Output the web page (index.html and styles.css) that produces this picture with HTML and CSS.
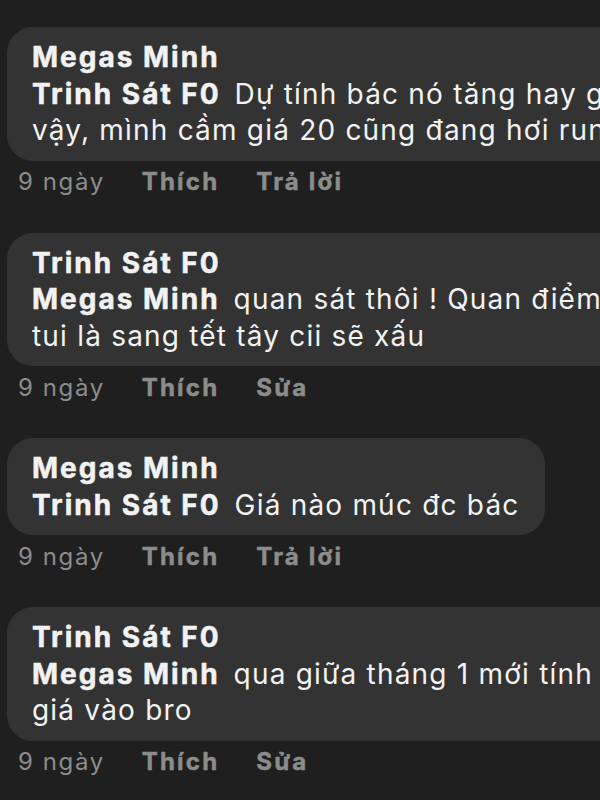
FILE: index.html
```html
<!DOCTYPE html>
<html lang="vi">
<head>
<meta charset="utf-8">
<link rel="stylesheet" href="styles.css">
</head>
<body>
<div class="thread">
  <div class="comment">
    <div class="bubble">
      <div class="line name">Megas Minh</div>
      <div class="line"><span class="tag">Trinh Sát F0</span>Dự tính bác nó tăng hay giảm</div>
      <div class="line">vậy, mình cầm giá 20 cũng đang hơi run</div>
    </div>
    <div class="meta"><span class="time">9 ngày</span><span class="act">Thích</span><span class="act">Trả lời</span></div>
  </div>
  <div class="comment">
    <div class="bubble">
      <div class="line name">Trinh Sát F0</div>
      <div class="line"><span class="tag">Megas Minh</span>quan sát thôi ! Quan điểm của</div>
      <div class="line">tui là sang tết tây cii sẽ xấu</div>
    </div>
    <div class="meta"><span class="time">9 ngày</span><span class="act">Thích</span><span class="act">Sửa</span></div>
  </div>
  <div class="comment">
    <div class="bubble fit">
      <div class="line name">Megas Minh</div>
      <div class="line"><span class="tag">Trinh Sát F0</span>Giá nào múc đc bác</div>
    </div>
    <div class="meta"><span class="time">9 ngày</span><span class="act">Thích</span><span class="act">Trả lời</span></div>
  </div>
  <div class="comment">
    <div class="bubble">
      <div class="line name">Trinh Sát F0</div>
      <div class="line"><span class="tag">Megas Minh</span>qua giữa tháng 1 mới tính</div>
      <div class="line">giá vào bro</div>
    </div>
    <div class="meta"><span class="time">9 ngày</span><span class="act">Thích</span><span class="act">Sửa</span></div>
  </div>
</div>
</body>
</html>
```
FILE: styles.css
```css
html, body {
  margin: 0;
  padding: 0;
  background: #1f1f1f;
  overflow: hidden;
}
body {
  width: 600px;
  height: 800px;
  font-family: Inter, "Noto Sans", sans-serif;
  color: #f2f2f2;
}
.thread {
  padding: 27px 0 0 7px;
  display: flex;
  flex-direction: column;
  gap: 30px;
}
.comment {
  display: flex;
  flex-direction: column;
  align-items: flex-start;
}
.bubble {
  background: #333333;
  border-radius: 26px;
  padding: 12px 25px 12px 25px;
  width: 780px;
  box-sizing: border-box;
}
.bubble.fit {
  width: auto;
}
.line {
  font-size: 28px;
  line-height: 36.5px;
  white-space: nowrap;
  letter-spacing: 1.2px;
}
.name, .tag {
  font-weight: 700;
  letter-spacing: 2px;
  -webkit-text-stroke: 0.5px #f2f2f2;
}
.tag {
  margin-right: 14px;
}
.meta {
  display: flex;
  gap: 37px;
  padding-left: 11px;
  height: 42px;
  align-items: center;
  font-size: 24px;
  letter-spacing: 1.6px;
  color: #8c8c8c;
}
.act {
  font-weight: 700;
  letter-spacing: 2.2px;
  -webkit-text-stroke: 0.5px #8c8c8c;
}
```
